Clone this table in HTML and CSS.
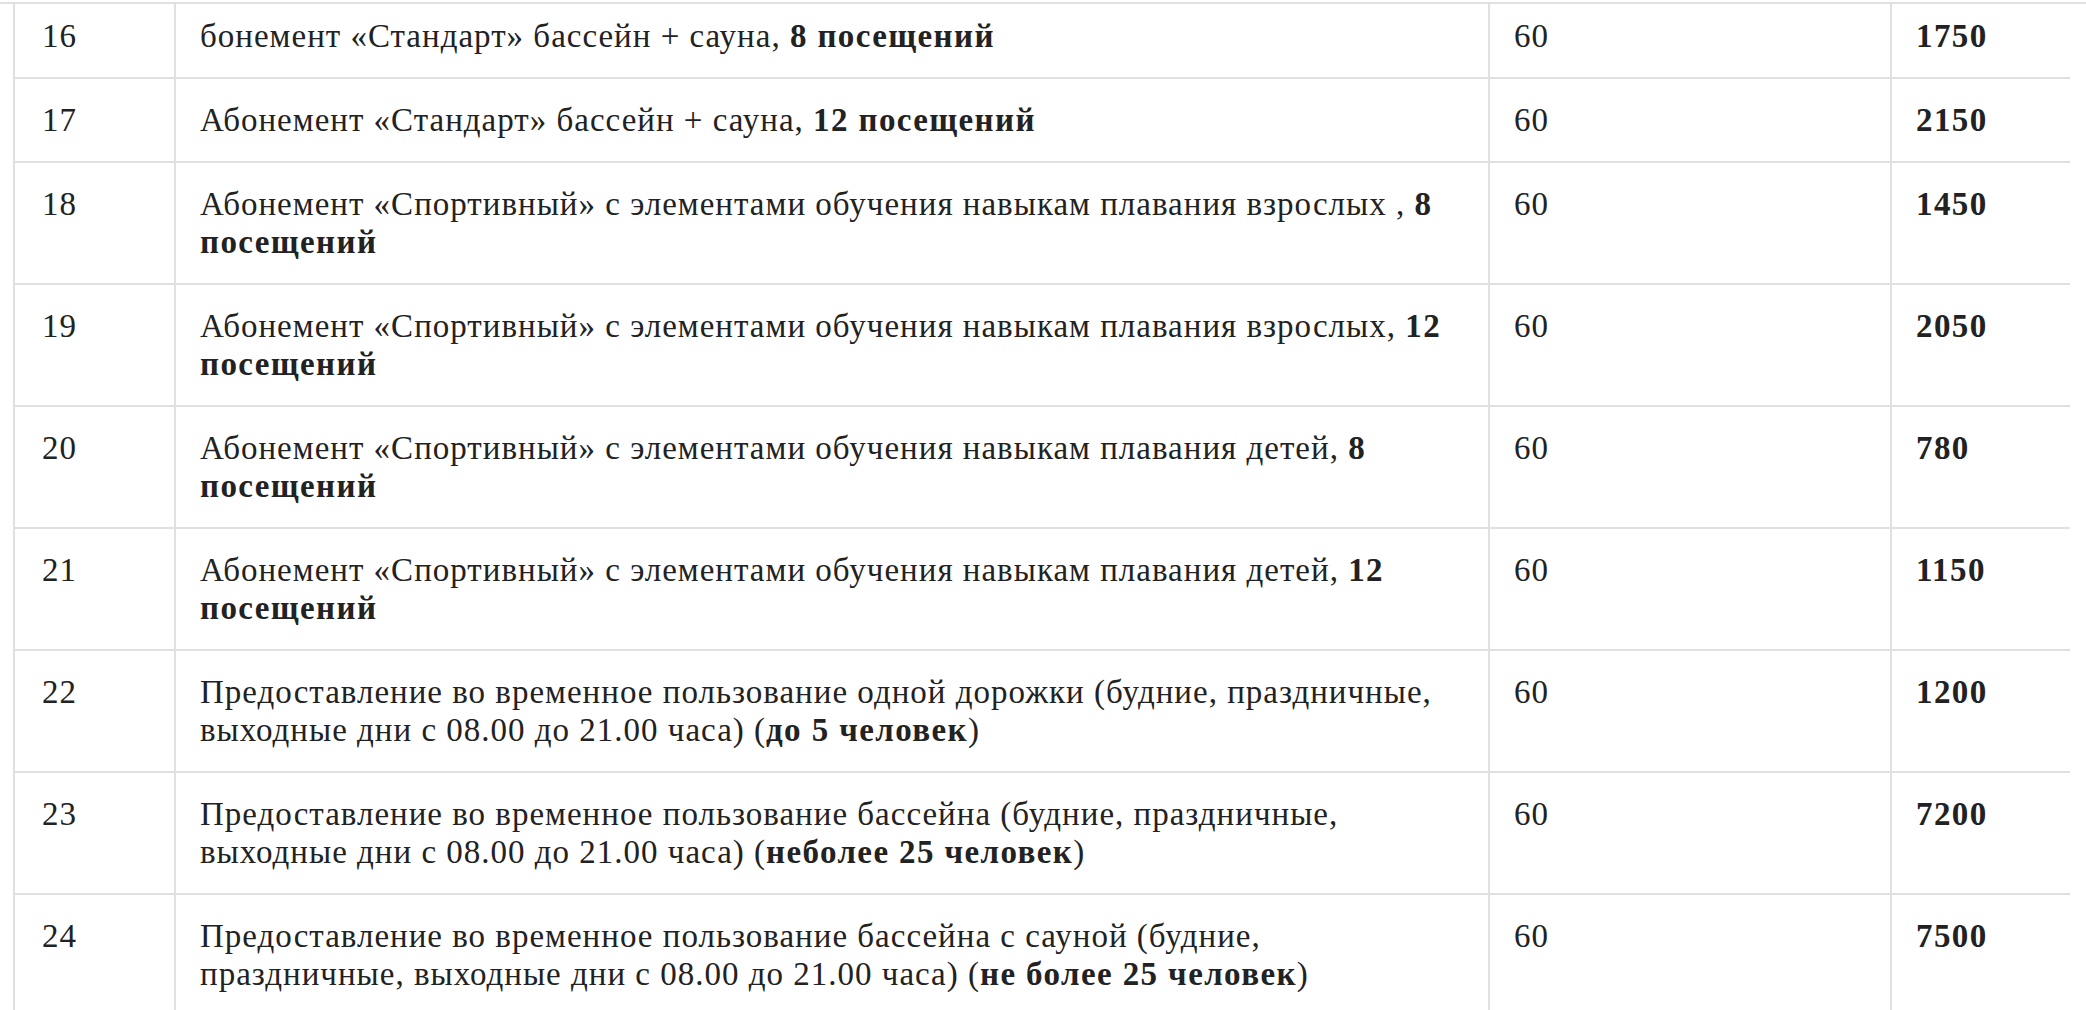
FILE: index.html
```html
<!DOCTYPE html>
<html lang="ru">
<head>
  <meta charset="UTF-8">
  <title>Цены — бассейн</title>
  <link rel="stylesheet" href="styles.css">
</head>
<body>

  <div class="topline"></div>

  <table class="prices">
    <colgroup>
      <col class="c-num">
      <col class="c-name">
      <col class="c-time">
      <col class="c-price">
    </colgroup>
    <tr>
      <td>16</td>
      <td>бонемент «Стандарт» бассейн + сауна, <b>8 посещений</b></td>
      <td>60</td>
      <td><b>1750</b></td>
    </tr>
    <tr>
      <td>17</td>
      <td>Абонемент «Стандарт» бассейн + сауна, <b>12 посещений</b></td>
      <td>60</td>
      <td><b>2150</b></td>
    </tr>
    <tr>
      <td>18</td>
      <td>Абонемент «Спортивный» с элементами обучения навыкам плавания взрослых , <b>8<br>посещений</b></td>
      <td>60</td>
      <td><b>1450</b></td>
    </tr>
    <tr>
      <td>19</td>
      <td>Абонемент «Спортивный» с элементами обучения навыкам плавания взрослых, <b>12<br>посещений</b></td>
      <td>60</td>
      <td><b>2050</b></td>
    </tr>
    <tr>
      <td>20</td>
      <td>Абонемент «Спортивный» с элементами обучения навыкам плавания детей, <b>8<br>посещений</b></td>
      <td>60</td>
      <td><b>780</b></td>
    </tr>
    <tr>
      <td>21</td>
      <td>Абонемент «Спортивный» с элементами обучения навыкам плавания детей, <b>12<br>посещений</b></td>
      <td>60</td>
      <td><b>1150</b></td>
    </tr>
    <tr>
      <td>22</td>
      <td>Предоставление во временное пользование одной дорожки (будние, праздничные,<br>выходные дни с 08.00 до 21.00 часа) (<b>до 5 человек</b>)</td>
      <td>60</td>
      <td><b>1200</b></td>
    </tr>
    <tr>
      <td>23</td>
      <td>Предоставление во временное пользование бассейна (будние, праздничные,<br>выходные дни с 08.00 до 21.00 часа) (<b>неболее 25 человек</b>)</td>
      <td>60</td>
      <td><b>7200</b></td>
    </tr>
    <tr>
      <td>24</td>
      <td>Предоставление во временное пользование бассейна с сауной (будние,<br>праздничные, выходные дни с 08.00 до 21.00 часа) (<b>не более 25 человек</b>)</td>
      <td>60</td>
      <td><b>7500</b></td>
    </tr>
  </table>

</body>
</html>
```

FILE: styles.css
```css
body { margin: 0; background: #fff; color: #222; font-family: "Liberation Serif", "Times New Roman", serif; font-size: 33px; line-height: 38px; letter-spacing: 1px; }
.topline { position: fixed; top: 0; left: 0; right: 0; height: 2px; border-bottom: 2px solid #e0e0e0; background: #fff; z-index: 2; }
.prices { margin: -5px 0 0 13px; width: 2057px; border-collapse: separate; border-spacing: 0; table-layout: fixed; }
.prices col.c-num { width: 161px; }
.prices col.c-name { width: 1314px; }
.prices col.c-time { width: 402px; }
.prices col.c-price { width: 180px; }
.prices td { vertical-align: top; padding: 22px 8px 22px 24px; border-left: 2px solid #e0e0e0; border-bottom: 2px solid #e0e0e0; white-space: nowrap; }
.prices td:first-child { padding-left: 27px; }
.prices b { font-weight: bold; letter-spacing: 1.4px; }
```
